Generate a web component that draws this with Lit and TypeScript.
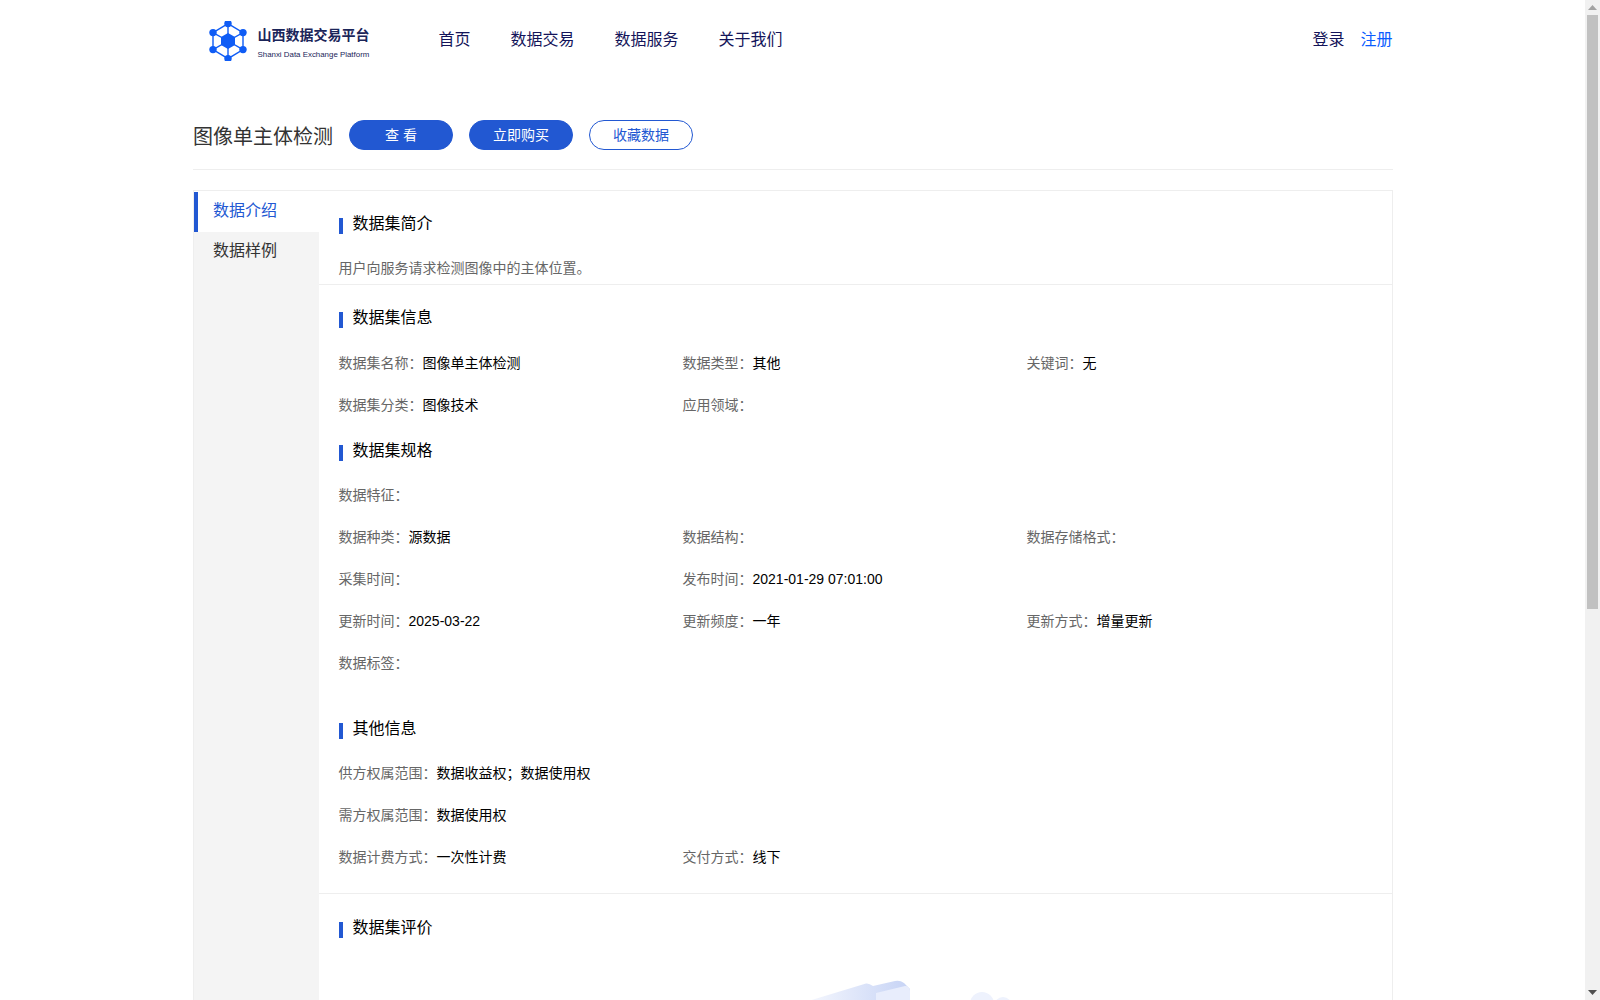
import { LitElement, html, css, svg } from "lit";
import { customElement } from "lit/decorators.js";

type Field = [string, string?];

const INFO: Field[][] = [
  [["数据集名称：", "图像单主体检测"], ["数据类型：", "其他"], ["关键词：", "无"]],
  [["数据集分类：", "图像技术"], ["应用领域："]],
];

const SPEC: Field[][] = [
  [["数据特征："]],
  [["数据种类：", "源数据"], ["数据结构："], ["数据存储格式："]],
  [["采集时间："], ["发布时间：", "2021-01-29 07:01:00"]],
  [["更新时间：", "2025-03-22"], ["更新频度：", "一年"], ["更新方式：", "增量更新"]],
  [["数据标签："]],
];

const OTHER: Field[][] = [
  [["供方权属范围：", "数据收益权；数据使用权"]],
  [["需方权属范围：", "数据使用权"]],
  [["数据计费方式：", "一次性计费"], ["交付方式：", "线下"]],
];

const NAV = ["首页", "数据交易", "数据服务", "关于我们"];

// logo node positions, same order as the hexagon outline
const NODES = [
  [20, 2.6],
  [35, 11.6],
  [35, 28.6],
  [20, 37.6],
  [5, 28.6],
  [5, 11.6],
];

@customElement("app-root")
export class AppRoot extends LitElement {
  static styles = css`
    :host {
      display: flex;
      height: 1000px;
      overflow: hidden;
      background: #fff;
      font-family: "Liberation Sans", "Noto Sans CJK SC", sans-serif;
      font-size: 14px;
      color: #000;
    }
    .page {
      flex: 1;
      min-width: 0;
      padding-left: 1px;
    }
    .wrap {
      width: 1200px;
      margin: 0 auto;
    }

    /* header */
    .header {
      display: flex;
      align-items: center;
      height: 76px;
    }
    .logo {
      display: flex;
      align-items: flex-start;
      width: 245.5px;
      height: 40px;
      padding-left: 14.5px;
      margin-top: 6px;
      box-sizing: border-box;
    }
    .logo svg {
      flex: none;
      display: block;
    }
    .logo-text {
      margin-left: 10px;
      padding-top: 6px;
      color: #1b2559;
    }
    .logo-name {
      font-size: 14px;
      font-weight: 700;
      line-height: 16px;
      white-space: nowrap;
    }
    .logo-sub {
      margin-top: 6px;
      font-size: 7.9px;
      line-height: 12px;
      white-space: nowrap;
    }
    .nav {
      display: flex;
      gap: 40px;
      font-size: 16px;
      color: #14145a;
    }
    .user {
      display: flex;
      gap: 16px;
      margin-left: auto;
      margin-right: 0.5px;
      font-size: 16px;
      color: #14145a;
    }
    .user .reg {
      color: #0a5cff;
    }

    /* title row */
    .title-row {
      display: flex;
      align-items: center;
      gap: 16px;
      padding: 44px 0 19px;
      border-bottom: 1px solid #eee;
    }
    .title {
      width: 140px;
      font-size: 20px;
      line-height: 34px;
      height: 30px;
      color: #333;
      white-space: nowrap;
    }
    .btn {
      width: 104px;
      height: 30px;
      box-sizing: border-box;
      border: 1px solid #2258d2;
      border-radius: 15px;
      background: #2258d2;
      color: #fff;
      font-size: 14px;
      line-height: 28px;
      text-align: center;
    }
    .btn.ghost {
      background: #fff;
      color: #2258d2;
    }

    /* panel */
    .panel {
      display: flex;
      margin-top: 20px;
      border: 1px solid #eee;
    }
    .side {
      flex: none;
      width: 125px;
      border-top: 1px solid #fff;
      background: #f4f4f4;
    }
    .tab {
      height: 40px;
      padding-left: 19px;
      font-size: 16px;
      line-height: 38px;
      color: #333;
    }
    .tab.on {
      padding-left: 15px;
      border-left: 4px solid #2258d2;
      background: #fff;
      color: #2258d2;
    }
    .body {
      flex: 1;
      min-width: 0;
    }
    .section {
      padding: 20px 20px 15px;
      border-bottom: 1px solid #eee;
    }
    .section.first {
      padding-bottom: 5px;
    }
    .section.last {
      padding-top: 21px;
      border-bottom: 0;
    }
    .head {
      display: flex;
      align-items: center;
      gap: 9.5px;
      height: 24px;
      box-sizing: border-box;
      padding-top: 2px;
      font-size: 16px;
      line-height: 22px;
    }
    .head::before {
      content: "";
      width: 4px;
      height: 16px;
      margin-top: 3px;
      background: #2258d2;
    }
    .head.next {
      margin-top: 12px;
    }
    .head.far {
      margin-top: 32px;
    }
    .desc {
      margin: 22px 0 0 -0.5px;
      line-height: 22px;
      color: #666;
    }
    .rows {
      margin: 12px 0 0 -0.5px;
    }
    .rows.first {
      margin-top: 13px;
    }
    .row {
      display: grid;
      grid-template-columns: repeat(3, 344px);
      height: 42px;
      line-height: 42px;
    }
    .row span {
      white-space: nowrap;
    }
    .label {
      color: #666;
    }
    .art {
      display: block;
      width: 1033px;
      height: 140px;
      margin-top: 20px;
    }

    /* window scrollbar */
    .bar {
      flex: none;
      display: flex;
      flex-direction: column;
      align-items: center;
      width: 15px;
      height: 1000px;
      background: #f1f1f1;
    }
    .arrow {
      flex: none;
      display: flex;
      align-items: center;
      justify-content: center;
      height: 15px;
    }
    .thumb {
      flex: none;
      width: 11px;
      height: 594px;
      background: #c1c1c1;
    }
    .rest {
      flex: 1;
    }
  `;

  private renderRows(rows: Field[][], first = false) {
    return html`<div class="rows ${first ? "first" : ""}">
      ${rows.map(
        (row) => html`<div class="row">
          ${row.map(
            ([k, v]) => html`<div>
              <span class="label">${k}</span><span>${v ?? ""}</span>
            </div>`
          )}
        </div>`
      )}
    </div>`;
  }

  private renderLogo() {
    return html`<svg width="40" height="40" viewBox="0 0 40 40">
      <g stroke="#0f5cf5" stroke-width="1.4" fill="none">
        <polygon points=${NODES.map((n) => n.join(",")).join(" ")}></polygon>
        ${NODES.map(
          ([x, y]) => svg`<line x1="20" y1="20" x2=${x} y2=${y}></line>`
        )}
      </g>
      <polygon
        fill="#0f5cf5"
        points="20,12 27,16 27,24 20,28 13,24 13,16"
      ></polygon>
      ${NODES.map(
        ([x, y]) => svg`<circle cx=${x} cy=${y} r="3.7" fill="#0f5cf5"></circle>`
      )}
    </svg>`;
  }

  render() {
    return html`
      <div class="page">
        <div class="wrap">
          <div class="header">
            <div class="logo">
              ${this.renderLogo()}
              <div class="logo-text">
                <div class="logo-name">山西数据交易平台</div>
                <div class="logo-sub">Shanxi Data Exchange Platform</div>
              </div>
            </div>
            <div class="nav">${NAV.map((n) => html`<span>${n}</span>`)}</div>
            <div class="user"><span>登录</span><span class="reg">注册</span></div>
          </div>

          <div class="title-row">
            <div class="title">图像单主体检测</div>
            <div class="btn">查 看</div>
            <div class="btn">立即购买</div>
            <div class="btn ghost">收藏数据</div>
          </div>

          <div class="panel">
            <div class="side">
              <div class="tab on">数据介绍</div>
              <div class="tab">数据样例</div>
            </div>
            <div class="body">
              <div class="section first">
                <div class="head">数据集简介</div>
                <div class="desc">用户向服务请求检测图像中的主体位置。</div>
              </div>
              <div class="section">
                <div class="head">数据集信息</div>
                ${this.renderRows(INFO, true)}
                <div class="head next">数据集规格</div>
                ${this.renderRows(SPEC)}
                <div class="head far">其他信息</div>
                ${this.renderRows(OTHER)}
              </div>
              <div class="section last">
                <div class="head">数据集评价</div>
                <svg class="art" viewBox="339 960 1033 140">
                  <defs>
                    <linearGradient id="tube" x1="0" x2="1" y1="0" y2="0">
                      <stop offset="0" stop-color="#f6f8fe"></stop>
                      <stop offset="1" stop-color="#c6d3f5"></stop>
                    </linearGradient>
                  </defs>
                  <path
                    fill="url(#tube)"
                    d="M805 1003 L866 984.5 Q869 984 873 987 L895 982 Q900 981 904 984 L910 990 V1040 H805 Z"
                  ></path>
                  <path
                    fill="#e8edfc"
                    d="M876 994 L905 987 Q910 987 910 992 V1040 H876 Z"
                  ></path>
                  <circle cx="982" cy="1005" r="12" fill="#eef2fd"></circle>
                  <circle cx="1003" cy="1007" r="9" fill="#eef2fd"></circle>
                </svg>
              </div>
            </div>
          </div>
        </div>
      </div>

      <div class="bar">
        <div class="arrow">
          <svg width="9" height="5"><path d="M4.5 0 L9 5 H0 Z" fill="#a3a3a3"></path></svg>
        </div>
        <div class="thumb"></div>
        <div class="rest"></div>
        <div class="arrow">
          <svg width="9" height="5"><path d="M0 0 H9 L4.5 5 Z" fill="#505050"></path></svg>
        </div>
      </div>
    `;
  }
}
